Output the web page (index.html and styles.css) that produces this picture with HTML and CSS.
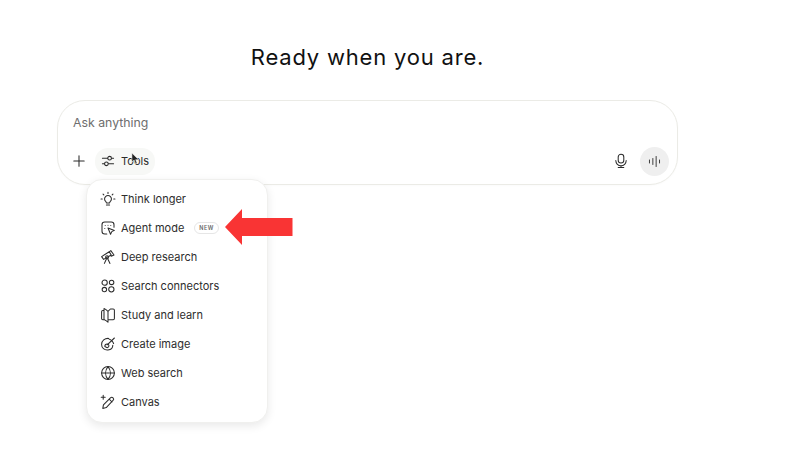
FILE: index.html
```html
<!DOCTYPE html>
<html lang="en">
<head>
<meta charset="utf-8">
<title>Ready when you are.</title>
<link rel="stylesheet" href="styles.css">
</head>
<body>
<main class="page">
  <h1 class="title">Ready when you are.</h1>
  <section class="composer">
    <div class="placeholder">Ask anything</div>
    <div class="toolbar">
      <button class="plain plus" aria-label="Add">
        <svg class="ic" viewBox="0 0 20 20"><path d="M10 3.500v13M3.500 10h13"/></svg>
      </button>
      <button class="tools">
        <svg class="ic" viewBox="0 0 20 20"><path d="M3 6.500h6.500M14.500 6.500H17M3 13.500h2.500M10.500 13.500H17"/><circle cx="12" cy="6.500" r="2.300"/><circle cx="8" cy="13.500" r="2.300"/></svg>
        <span>Tools</span>
      </button>
      <span class="spacer"></span>
      <button class="plain mic" aria-label="Dictate">
        <svg class="ic" viewBox="0 0 20 20"><rect x="6.500" y="1.500" width="7" height="11" rx="3.500"/><path d="M3.500 9.500a6.500 6.500 0 0 0 13 0M10 16v2M6.500 18h7"/></svg>
      </button>
      <button class="voice" aria-label="Voice">
        <svg class="ic" viewBox="0 0 20 20"><path d="M3.300 8v4M7.800 6v8M12.200 3.300v13.400M16.700 8v4"/></svg>
      </button>
    </div>
    <svg class="cursor" viewBox="0 0 10 14"><path d="M1 1v10l2.500-2.200L5.200 13l1.600-.7-1.600-4H8.500z"/></svg>
    <div class="menu">
      <div class="item">
        <svg class="ic" viewBox="0 0 20 20"><path d="M7 13a4.300 4.300 0 1 1 6 0c-.6.500-.9 1.100-1 2H8c-.1-.9-.4-1.500-1-2zM8 17.500h4M10 1.500v1.500M3.800 3.800l1 1M16.200 3.800l-1 1M1.300 10h1.500M17.200 10h1.500"/></svg>
        <span>Think longer</span>
      </div>
      <div class="item">
        <svg class="ic" viewBox="0 0 20 20"><path d="M8.500 17.500H6A3.500 3.500 0 0 1 2.500 14V6A3.500 3.500 0 0 1 6 2.500h8A3.500 3.500 0 0 1 17.500 6v3"/><path d="M10 10l8 3-3.300 1.500-1.500 3.300z"/><path d="M6.500 7h.01M10 6.500h.01M13.500 7h.01M6 10.500h.01"/></svg>
        <span>Agent mode</span>
        <span class="badge">NEW</span>
      </div>
      <div class="item">
        <svg class="ic" viewBox="0 0 20 20"><path d="M2 9.500l9.500-6 2.500 4-9.500 5.500zM11.500 3.500l2-1.500 4 5.500-3.500 1.500-.5-2M9.500 12l3 6M8 12.500L5.500 18"/><circle cx="8.800" cy="10.300" r="1.800"/></svg>
        <span>Deep research</span>
      </div>
      <div class="item">
        <svg class="ic" viewBox="0 0 20 20"><circle cx="5.800" cy="5.800" r="3.300"/><circle cx="14.500" cy="5.500" r="2.800"/><circle cx="5.500" cy="14.500" r="2.800"/><circle cx="14.200" cy="14.200" r="3.300"/></svg>
        <span>Search connectors</span>
      </div>
      <div class="item">
        <svg class="ic" viewBox="0 0 20 20"><path d="M10 5.500C8.500 4 7 2.800 5 2v13.500c2 .8 3.500 2 5 3.500zM10 5.500L13 2.500h3.500A1.500 1.500 0 0 1 18 4v10.500a1.500 1.500 0 0 1-1.500 1.500H10M5 4.500H3.500A1.500 1.500 0 0 0 2 6v8.500A1.500 1.500 0 0 0 3.500 16H5"/></svg>
        <span>Study and learn</span>
      </div>
      <div class="item">
        <svg class="ic" viewBox="0 0 20 20"><path d="M11 3C6 2.500 2 6 2 10.500S5.500 18 10 17.500c3.500-.4 6-3 6-6"/><path d="M18 2.500L9 11M11.500 4c2 0 5 3.500 5.500 5.500"/><path d="M6 13c0-2 1.500-3 3-3s2.500 1.500 2 3-2 2.500-5 0z"/></svg>
        <span>Create image</span>
      </div>
      <div class="item">
        <svg class="ic" viewBox="0 0 20 20"><circle cx="10" cy="10" r="8"/><path d="M2 10h16M10 2c-4 4.800-4 11.200 0 16M10 2c4 4.800 4 11.200 0 16"/></svg>
        <span>Web search</span>
      </div>
      <div class="item">
        <svg class="ic" viewBox="0 0 20 20"><path d="M3.500 18l.8-4.500L13 4.800a2.300 2.300 0 0 1 3.300 3.300L7.800 17zM11.500 6.500l3.500 3.500M4 1.500v5M1.500 4h5"/></svg>
        <span>Canvas</span>
      </div>
    </div>
    <svg class="arrow" viewBox="0 0 68 36"><path d="M0 18L17 0v9h50.500v18H17v9z"/></svg>
  </section>
</main>
</body>
</html>
```
FILE: styles.css
```css
* { box-sizing: border-box; }
html, body { margin: 0; height: 100%; background: #fff; overflow: hidden; }
body { font-family: Inter, "Liberation Sans", sans-serif; color: #222; }
.page { display: flex; flex-direction: column; align-items: flex-start; padding: 43px 0 0 57px; }
.title {
  width: 621px; margin: 0 0 29px; text-align: center;
  font-size: 22px; line-height: 28px; font-weight: 400; letter-spacing: 0.8px; color: #111;
}
.composer {
  position: relative; width: 621px; height: 85px;
  border: 1px solid #ebebe6; border-radius: 28px; background: #fff;
  padding: 13px 8px 0 15px;
  display: flex; flex-direction: column;
  box-shadow: 0 1px 2px rgba(0,0,0,.02);
}
.placeholder { font-size: 12.300px; line-height: 18px; color: #6e6e6e; }
.toolbar { display: flex; align-items: center; margin-top: 14px; height: 30px; }
button { border: 0; background: none; padding: 0; font: inherit; color: inherit; display: flex; align-items: center; justify-content: center; }
.ic { width: 16px; height: 16px; fill: none; stroke: #2b2b2b; stroke-width: 1.300; stroke-linecap: round; stroke-linejoin: round; flex: none; }
.plus { width: 12px; height: 30px; margin-right: 10px; }
.tools {
  gap: 5px; height: 27px; width: 60px; border-radius: 13px; background: #f7f8f6;
  font-size: 11px; color: #2b2b2b; padding-right: 1px;
}
.spacer { flex: 1; }
.mic { width: 30px; height: 30px; margin-right: 4px; }
.mic .ic { width: 16px; height: 16px; }
.voice { width: 29px; height: 29px; border-radius: 50%; background: #efefef; }
.voice .ic { width: 15px; height: 15px; stroke-width: 1.200; }
.cursor { position: absolute; left: 73px; top: 51px; width: 9px; height: 13px; fill: #222; stroke: #fff; stroke-width: .6; }
.menu {
  position: absolute; left: 28px; top: 78px; width: 182px; height: 244px;
  background: #fff; border: 1px solid #f0f0ee; border-radius: 16px;
  box-shadow: 0 3px 10px rgba(0,0,0,.09);
  padding: 4px 0 0 13px; display: flex; flex-direction: column;
}
.item { display: flex; align-items: center; gap: 5px; height: 29px; font-size: 11px; color: #2d2d2d; }
.badge {
  margin-left: 5px; height: 12px; padding: 0 4px; border: 1px solid #e6e6e6; border-radius: 7px;
  font-size: 5.500px; line-height: 10px; font-weight: 600; color: #666; letter-spacing: .4px;
}
.arrow { position: absolute; left: 167px; top: 108px; width: 68px; height: 36px; fill: #f93434; }
```
